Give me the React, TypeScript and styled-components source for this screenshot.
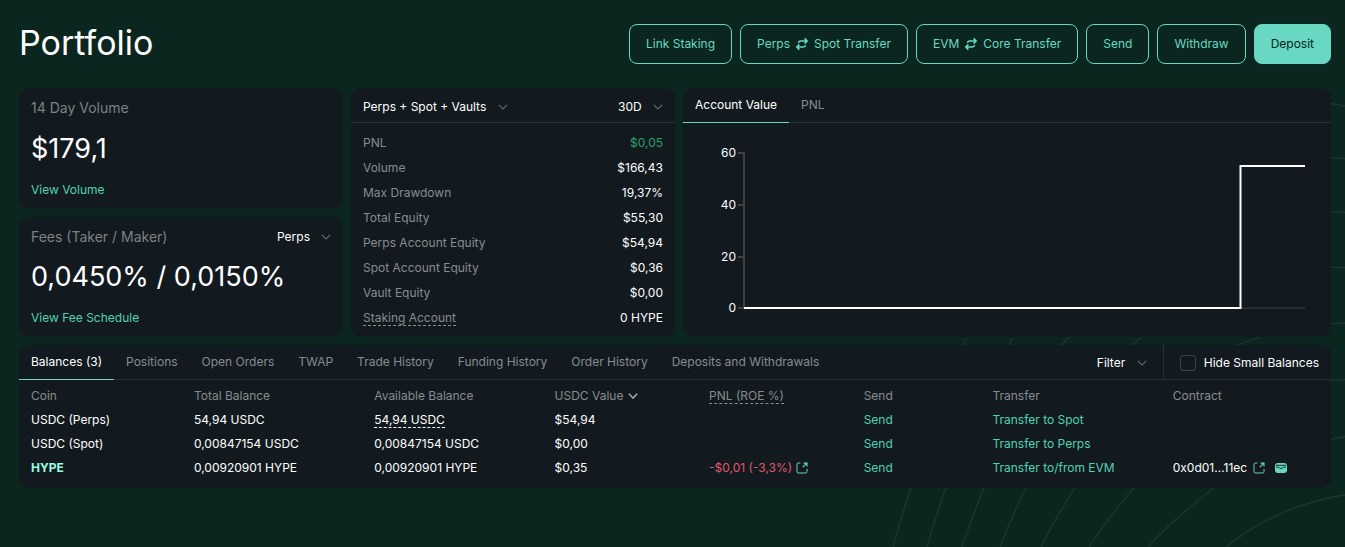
import React, { useId, useState } from "react";
import styled, { createGlobalStyle, css } from "styled-components";

const color = {
  page: "#0b261f",
  card: "#121a1f",
  line: "#2c3033",
  text: "#ffffff",
  muted: "#878c8f",
  label: "#7c8284",
  teal: "#50d2b4",
  button: "#68d8c2",
  mint: "#97fce4",
  green: "#2aa070",
  red: "#e0566b",
};

const GlobalStyle = createGlobalStyle`
  *, *::before, *::after { box-sizing: border-box; }
  body {
    margin: 0;
    background: ${color.page};
    color: ${color.text};
    font-family: Inter, "Liberation Sans", sans-serif;
    font-size: 12px;
    line-height: 16px;
  }
  button, select, input { font: inherit; color: inherit; }
`;

const Contours = styled.svg`
  position: absolute;
  top: 0;
  right: 0;
  z-index: -1;
  fill: none;
  stroke: #1c372f;
  stroke-width: 1.3;
`;

const Page = styled.main`
  display: flex;
  flex-direction: column;
  gap: 8px;
  padding: 24px 14px 24px 19px;
`;

const Header = styled.header`
  display: flex;
  align-items: center;
  justify-content: space-between;
  margin-bottom: 16px;
`;

const Title = styled.h1`
  margin: 0;
  font-size: 34px;
  font-weight: 400;
  line-height: 38px;
  padding-bottom: 2px;
`;

const Actions = styled.div`
  display: flex;
  gap: 8px;
`;

const ActionButton = styled.button<{ $primary?: boolean }>`
  display: flex;
  align-items: center;
  gap: 6px;
  height: 40px;
  padding: 0 16px;
  border: 1px solid ${color.button};
  border-radius: 8px;
  background: ${(p) => (p.$primary ? color.button : "transparent")};
  color: ${(p) => (p.$primary ? "#04251f" : color.button)};
  cursor: pointer;
`;

const Overview = styled.section`
  display: grid;
  grid-template-columns: 1fr 1fr 2fr;
  gap: 8px;
`;

const Card = styled.section`
  min-width: 0;
  border-radius: 10px;
  background: ${color.card};
`;

const SummaryColumn = styled.div`
  display: grid;
  grid-template-rows: 1fr 1fr;
  gap: 8px;
`;

const SummaryCard = styled(Card)`
  display: flex;
  flex-direction: column;
  align-items: flex-start;
  justify-content: space-between;
  padding: 12px 12px 11px;
`;

const SummaryHead = styled.div`
  display: flex;
  align-items: center;
  justify-content: space-between;
  align-self: stretch;
`;

const SummaryLabel = styled.h2`
  margin: 0;
  color: ${color.label};
  font-size: 14px;
  font-weight: 400;
  line-height: 16px;
`;

const SummaryValue = styled.div`
  font-size: 27px;
  line-height: 32px;
`;

const TextLink = styled.a`
  color: ${color.teal};
  text-decoration: none;
`;

const PickerBox = styled.span`
  display: inline-grid;
  align-items: center;

  select,
  svg {
    grid-area: 1 / 1;
  }
  svg {
    justify-self: end;
    pointer-events: none;
  }
`;

const PickerSelect = styled.select`
  appearance: none;
  height: 16px;
  padding: 0 21px 0 0;
  border: 0;
  background: transparent;
  line-height: 16px;
  cursor: pointer;

  option {
    background: ${color.card};
  }
`;

const StatsHead = styled.div`
  display: flex;
  align-items: center;
  justify-content: space-between;
  height: 35px;
  padding: 3px 12px 0;
  border-bottom: 1px solid ${color.line};
`;

const StatList = styled.dl`
  margin: 0;
  padding: 7px 12px;
`;

const StatRow = styled.div`
  display: flex;
  align-items: center;
  justify-content: space-between;
  height: 25px;

  dt {
    color: ${color.muted};
  }
  dd {
    margin: 0;
  }
`;

const Gain = styled.span`
  color: ${color.green};
`;

const Loss = styled.span`
  color: ${color.red};
`;

const Hint = styled.span`
  border-bottom: 1px dashed currentColor;
`;

const TabBar = styled.div`
  display: flex;
  align-items: stretch;
  height: 35px;
  box-shadow: inset 0 -1px ${color.line};
`;

const Tab = styled.button<{ $active: boolean }>`
  padding: 0 12px;
  border: 0;
  border-bottom: 1px solid transparent;
  background: none;
  color: ${color.muted};
  white-space: nowrap;
  cursor: pointer;
  ${(p) =>
    p.$active &&
    css`
      border-bottom-color: ${color.button};
      color: ${color.text};
    `}
`;

const TabList = styled.div`
  display: flex;
`;

const Tools = styled.div`
  display: flex;
  margin-left: auto;
`;

const FilterCell = styled.div`
  display: flex;
  align-items: center;
  padding-right: 16px;
  border-right: 1px solid ${color.line};
`;

const CheckLabel = styled.label`
  display: flex;
  align-items: center;
  gap: 8px;
  padding: 0 12px 0 16px;
  cursor: pointer;
`;

const CheckBox = styled.input`
  appearance: none;
  width: 16px;
  height: 16px;
  margin: 0;
  border: 1px solid #3b4447;
  border-radius: 3px;

  &:checked {
    background: ${color.button};
  }
`;

const Chart = styled.svg`
  display: block;
  width: 100%;
  height: auto;

  text {
    fill: ${color.text};
    font-size: 12px;
    text-anchor: end;
  }
`;

const TableBox = styled.div`
  padding: 4px 12px 8px;
`;

const Table = styled.table`
  width: 100%;
  table-layout: fixed;
  border-collapse: collapse;

  th,
  td {
    height: 24px;
    padding: 0;
    text-align: left;
    white-space: nowrap;
    font-weight: 400;
  }
  thead th {
    color: ${color.muted};
  }
`;

const Col = styled.col<{ $share?: number }>`
  width: ${(p) => (p.$share ? `${p.$share}%` : "auto")};
`;

const Inline = styled.span<{ $gap?: number }>`
  display: inline-flex;
  align-items: center;
  gap: ${(p) => p.$gap ?? 4}px;
  vertical-align: middle;
`;

const CoinLink = styled.a`
  color: ${color.mint};
  font-weight: 700;
  text-decoration: none;
`;

const IconLink = styled.a`
  display: flex;
  color: ${color.button};
`;

const IconButton = styled.button`
  display: flex;
  padding: 0;
  border: 0;
  background: none;
  color: ${color.button};
  cursor: pointer;
`;

const SortButton = styled.button`
  display: inline-flex;
  align-items: center;
  gap: 5px;
  padding: 0;
  border: 0;
  background: none;
  color: inherit;
  vertical-align: middle;
  cursor: pointer;
`;

const Chevron = ({ stroke = "#646c6e", weight = 1.1 }) => (
  <svg width="10" height="6" viewBox="0 0 10 6" fill="none" aria-hidden="true">
    <path d="M0.8 0.8 5 5 9.2 0.8" stroke={stroke} strokeWidth={weight} />
  </svg>
);

const SwapIcon = () => (
  <svg width="12" height="14" viewBox="0 0 12 14" fill="none" stroke="currentColor" strokeWidth="1.6" aria-hidden="true">
    <path d="M2.4 5.8Q2.8 4 4.6 4H11M8.6 1.4 11.2 4 8.6 6.6" />
    <path d="M9.6 8.2Q9.2 10 7.4 10H1M3.4 7.4.8 10l2.6 2.6" />
  </svg>
);

const ExternalIcon = () => (
  <svg width="12" height="12" viewBox="0 0 12 12" fill="none" stroke="currentColor" aria-hidden="true">
    <path d="M4.4 1H2.3Q1 1 1 2.3V9.7Q1 11 2.3 11H9.7Q11 11 11 9.7V7" strokeWidth="1" />
    <path d="M6.8 5.2 10.4 1.6M7.6 1.1H11V4.4" strokeWidth="1.1" />
  </svg>
);

const WalletIcon = () => (
  <svg width="12" height="10" viewBox="0 0 12 10" aria-hidden="true">
    <rect width="12" height="10" rx="3" fill="currentColor" />
    <path d="M1 2.3H11M1 4.2H3.4Q4.2 5.4 6 5.4T8.6 4.2H11" fill="none" stroke={color.card} strokeWidth="0.9" />
  </svg>
);

const Picker = ({ label, options }: { label: string; options: string[] }) => (
  <PickerBox>
    <PickerSelect aria-label={label}>
      {options.map((o) => (
        <option key={o}>{o}</option>
      ))}
    </PickerSelect>
    <Chevron />
  </PickerBox>
);

const Tabs = ({ label, names }: { label: string; names: string[] }) => {
  const [active, setActive] = useState(0);
  return (
    <TabList role="tablist" aria-label={label}>
      {names.map((name, i) => (
        <Tab key={name} role="tab" aria-selected={i === active} $active={i === active} onClick={() => setActive(i)}>
          {name}
        </Tab>
      ))}
    </TabList>
  );
};

const stats: { name: React.ReactNode; value: React.ReactNode }[] = [
  { name: "PNL", value: <Gain>$0,05</Gain> },
  { name: "Volume", value: "$166,43" },
  { name: "Max Drawdown", value: "19,37%" },
  { name: "Total Equity", value: "$55,30" },
  { name: "Perps Account Equity", value: "$54,94" },
  { name: "Spot Account Equity", value: "$0,36" },
  { name: "Vault Equity", value: "$0,00" },
  { name: <Hint>Staking Account</Hint>, value: "0 HYPE" },
];

const contourPaths = [
  "M893 547Q901 517 911 488Q933 420 963 345L967 337Q1060 90 1331 103.5L1345 106",
  "M927 547Q935 518 946 488Q970 420 1009 345L1013 337Q1110 140 1331 157.3L1345 158.8",
  "M962 547Q972 517 984 488Q1010 420 1062 345L1069 337Q1160 205 1331 211.7L1345 212.4",
  "M1000 547Q1012 516 1026 488Q1060 415 1132 345L1142 337Q1225 265 1331 267.3H1345",
  "M1041 547Q1057 515 1075 488Q1130 400 1238 345Q1249 341 1260 337Q1300 324 1331 323.6L1345 323",
  "M1089 547Q1110 515 1134 488Q1215 390 1331 380.4L1345 379.6",
  "M1148 547Q1181 512 1214 488Q1275 447 1331 439L1345 436.5",
  "M1226 547Q1278 505 1345 495",
];

const ticks = [
  { value: 60, y: 30 },
  { value: 40, y: 82 },
  { value: 20, y: 134 },
  { value: 0, y: 185 },
];

const AccountChart = () => (
  <Chart viewBox="0 0 648 214" role="img" aria-label="Account value over 30 days">
    <path d="M61 185H622" stroke="#272d30" strokeWidth="2" />
    <path d="M61 29V186" stroke="#3f4142" strokeWidth="2" />
    {ticks.map((t) => (
      <g key={t.value}>
        <path d={`M55 ${t.y}H61`} stroke="#3f4142" strokeWidth="2" />
        <text x="53" y={t.y + 4}>
          {t.value}
        </text>
      </g>
    ))}
    <path d="M61 185H557.5V43H622" fill="none" stroke="#fff" strokeWidth="2" />
  </Chart>
);

export default function App() {
  const hideId = useId();
  return (
    <>
      <GlobalStyle />
      <Contours width="465" height="547" viewBox="880 0 465 547" aria-hidden="true">
        {contourPaths.map((d) => (
          <path key={d} d={d} />
        ))}
      </Contours>
      <Page>
        <Header>
          <Title>Portfolio</Title>
          <Actions>
            <ActionButton>Link Staking</ActionButton>
            <ActionButton>
              Perps <SwapIcon /> Spot Transfer
            </ActionButton>
            <ActionButton>
              EVM <SwapIcon /> Core Transfer
            </ActionButton>
            <ActionButton>Send</ActionButton>
            <ActionButton>Withdraw</ActionButton>
            <ActionButton $primary>Deposit</ActionButton>
          </Actions>
        </Header>

        <Overview>
          <SummaryColumn>
            <SummaryCard>
              <SummaryLabel>14 Day Volume</SummaryLabel>
              <SummaryValue>$179,1</SummaryValue>
              <TextLink href="#volume">View Volume</TextLink>
            </SummaryCard>
            <SummaryCard>
              <SummaryHead>
                <SummaryLabel>Fees (Taker / Maker)</SummaryLabel>
                <Picker label="Fee market" options={["Perps", "Spot"]} />
              </SummaryHead>
              <SummaryValue>0,0450% / 0,0150%</SummaryValue>
              <TextLink href="#fees">View Fee Schedule</TextLink>
            </SummaryCard>
          </SummaryColumn>

          <Card>
            <StatsHead>
              <Picker label="Accounts" options={["Perps + Spot + Vaults", "Perps"]} />
              <Picker label="Period" options={["30D", "7D"]} />
            </StatsHead>
            <StatList>
              {stats.map((s, i) => (
                <StatRow key={i}>
                  <dt>{s.name}</dt>
                  <dd>{s.value}</dd>
                </StatRow>
              ))}
            </StatList>
          </Card>

          <Card>
            <TabBar>
              <Tabs label="Chart" names={["Account Value", "PNL"]} />
            </TabBar>
            <AccountChart />
          </Card>
        </Overview>

        <Card>
          <TabBar>
            <Tabs
              label="Account activity"
              names={[
                "Balances (3)",
                "Positions",
                "Open Orders",
                "TWAP",
                "Trade History",
                "Funding History",
                "Order History",
                "Deposits and Withdrawals",
              ]}
            />
            <Tools>
              <FilterCell>
                <Picker label="Filter" options={["Filter"]} />
              </FilterCell>
              <CheckLabel htmlFor={hideId}>
                <CheckBox id={hideId} type="checkbox" />
                Hide Small Balances
              </CheckLabel>
            </Tools>
          </TabBar>
          <TableBox>
            <Table>
              <colgroup>
                <Col $share={12.65} />
                <Col $share={14} />
                <Col $share={14} />
                <Col $share={12} />
                <Col $share={12} />
                <Col $share={10} />
                <Col $share={14} />
                <Col />
              </colgroup>
              <thead>
                <tr>
                  <th scope="col">Coin</th>
                  <th scope="col">Total Balance</th>
                  <th scope="col">Available Balance</th>
                  <th scope="col">
                    <SortButton>
                      USDC Value <Chevron stroke="#b4babc" weight={1.3} />
                    </SortButton>
                  </th>
                  <th scope="col">
                    <Hint>PNL (ROE %)</Hint>
                  </th>
                  <th scope="col">Send</th>
                  <th scope="col">Transfer</th>
                  <th scope="col">Contract</th>
                </tr>
              </thead>
              <tbody>
                <tr>
                  <td>USDC (Perps)</td>
                  <td>54,94 USDC</td>
                  <td>
                    <Hint>54,94 USDC</Hint>
                  </td>
                  <td>$54,94</td>
                  <td />
                  <td>
                    <TextLink href="#send">Send</TextLink>
                  </td>
                  <td>
                    <TextLink href="#transfer">Transfer to Spot</TextLink>
                  </td>
                  <td />
                </tr>
                <tr>
                  <td>USDC (Spot)</td>
                  <td>0,00847154 USDC</td>
                  <td>0,00847154 USDC</td>
                  <td>$0,00</td>
                  <td />
                  <td>
                    <TextLink href="#send">Send</TextLink>
                  </td>
                  <td>
                    <TextLink href="#transfer">Transfer to Perps</TextLink>
                  </td>
                  <td />
                </tr>
                <tr>
                  <td>
                    <CoinLink href="#hype">HYPE</CoinLink>
                  </td>
                  <td>0,00920901 HYPE</td>
                  <td>0,00920901 HYPE</td>
                  <td>$0,35</td>
                  <td>
                    <Inline>
                      <Loss>-$0,01 (-3,3%)</Loss>
                      <IconLink href="#pnl" aria-label="Share PNL">
                        <ExternalIcon />
                      </IconLink>
                    </Inline>
                  </td>
                  <td>
                    <TextLink href="#send">Send</TextLink>
                  </td>
                  <td>
                    <TextLink href="#transfer">Transfer to/from EVM</TextLink>
                  </td>
                  <td>
                    <Inline $gap={10}>
                      <Inline $gap={6}>
                        0x0d01...11ec
                        <IconLink href="#contract" aria-label="Open contract">
                          <ExternalIcon />
                        </IconLink>
                      </Inline>
                      <IconButton aria-label="Add to wallet">
                        <WalletIcon />
                      </IconButton>
                    </Inline>
                  </td>
                </tr>
              </tbody>
            </Table>
          </TableBox>
        </Card>
      </Page>
    </>
  );
}
